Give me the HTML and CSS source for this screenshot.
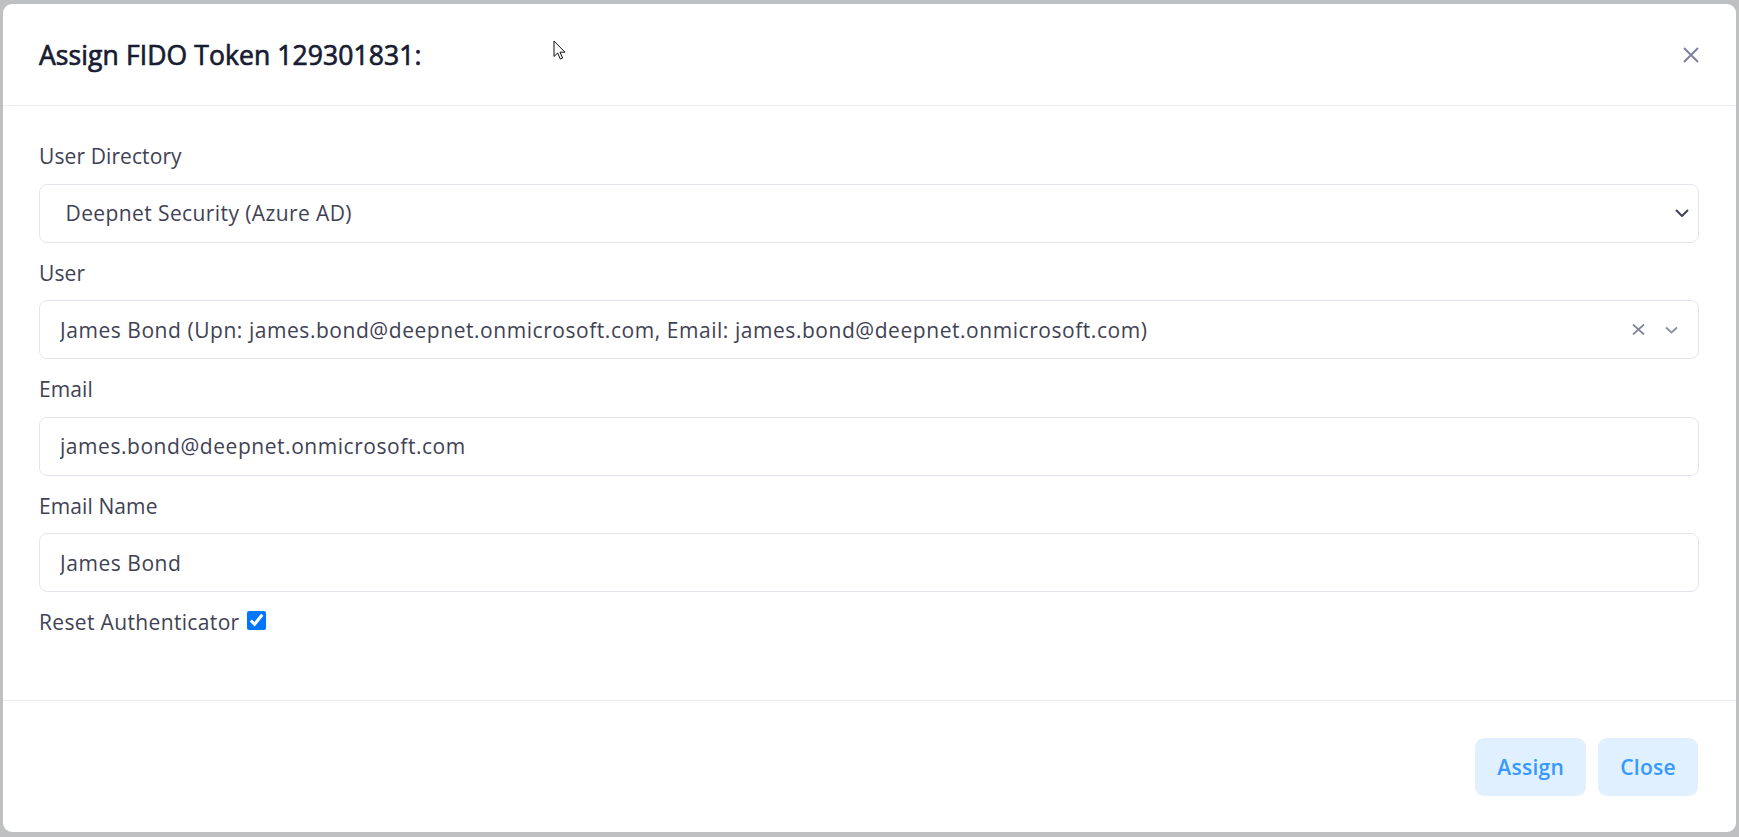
FILE: index.html
```html
<!DOCTYPE html>
<html lang="en">
<head>
<meta charset="utf-8">
<title>Assign FIDO Token</title>
<link rel="stylesheet" href="styles.css">
</head>
<body>
<div class="backdrop">
  <div class="modal">
    <div class="modal-header">
      <h2 class="modal-title">Assign FIDO Token 129301831:</h2>
      <button class="btn-close" aria-label="Close">
        <svg viewBox="0 0 16 16" width="16" height="16"><path d="M1 1L15 15M15 1L1 15"/></svg>
      </button>
    </div>
    <div class="modal-body">
      <div class="field">
        <label class="field-label">User Directory</label>
        <div class="control control-select">
          <span class="control-value">Deepnet Security (Azure AD)</span>
          <svg class="chev-dark" viewBox="0 0 14 8" width="14" height="8"><path d="M1 1L7 7L13 1"/></svg>
        </div>
      </div>
      <div class="field">
        <label class="field-label">User</label>
        <div class="control control-combo">
          <span class="control-value">James Bond (Upn: james.bond@deepnet.onmicrosoft.com, Email: james.bond@deepnet.onmicrosoft.com)</span>
          <div class="indicators">
            <svg class="ind-clear" viewBox="0 0 13 11" width="13" height="11"><path d="M1 0.5L12 10.5M12 0.5L1 10.5"/></svg>
            <svg class="ind-chev" viewBox="0 0 13 8" width="13" height="8"><path d="M1 1.5L6.5 6.5L12 1.5"/></svg>
          </div>
        </div>
      </div>
      <div class="field">
        <label class="field-label">Email</label>
        <input class="control control-input" type="text" value="james.bond@deepnet.onmicrosoft.com">
      </div>
      <div class="field">
        <label class="field-label">Email Name</label>
        <input class="control control-input" type="text" value="James Bond">
      </div>
      <div class="check-row">
        <label class="check-label">Reset Authenticator<input class="check" type="checkbox" checked></label>
      </div>
    </div>
    <div class="modal-footer">
      <button class="btn">Assign</button>
      <button class="btn">Close</button>
    </div>
  </div>
  <svg class="cursor" viewBox="0 0 13 20" width="13" height="20"><path d="M1 1L1 16.5L4.6 13L7.3 19L9.6 18L7 12.2L12 12.2Z"/></svg>
</div>
</body>
</html>
```

FILE: styles.css
```css
html, body {
  margin: 0;
  height: 100%;
}

body {
  background: #bfc0c2;
  font-family: "Open Sans", "Noto Sans", sans-serif;
  color: #3f4254;
  overflow: hidden;
}

.backdrop {
  position: relative;
  height: 100vh;
  box-sizing: border-box;
  padding: 4px 3px 5px 3px;
  display: flex;
}

.modal {
  flex: 1;
  background: #ffffff;
  border-radius: 9px;
  display: flex;
  flex-direction: column;
  overflow: hidden;
}

.modal-header {
  flex: none;
  height: 101px;
  border-bottom: 1px solid #ebedf3;
  display: flex;
  align-items: center;
  justify-content: space-between;
  padding: 0 37px 0 36px;
}

.modal-title {
  margin: 0;
  font-size: 26.5px;
  font-weight: 500;
  letter-spacing: 0.1px;
  -webkit-text-stroke: 0.7px #181c32;
  color: #181c32;
}

.btn-close {
  width: 16px;
  height: 16px;
  padding: 0;
  border: 0;
  background: none;
  display: flex;
}

.btn-close path {
  stroke: #7e8299;
  stroke-width: 2;
  fill: none;
}

.modal-body {
  flex: 1;
  padding: 35px 37px 0 36px;
}

.field {
  margin-bottom: 15px;
}

.field-label {
  display: block;
  font-size: 21px;
  line-height: 31.5px;
  margin-bottom: 11px;
  color: #3f4254;
  letter-spacing: 0.1px;
}

.control {
  display: flex;
  align-items: center;
  width: 100%;
  height: 59px;
  box-sizing: border-box;
  border: 1px solid #e4e6ef;
  border-radius: 8px;
  background: #ffffff;
  font-family: inherit;
  font-size: 21px;
  letter-spacing: 0.55px;
  color: #3f4254;
  padding: 0 20px;
  margin: 0;
  outline: none;
}

.control-value {
  flex: 1;
  white-space: nowrap;
  overflow: hidden;
}

.control-select {
  padding: 0 9px 0 25.5px;
  letter-spacing: 0.4px;
}

.chev-dark path {
  stroke: #3f4254;
  stroke-width: 2;
  fill: none;
}

.control-combo {
  padding: 0 20px 0 20px;
}

.indicators {
  display: flex;
  align-items: center;
  gap: 20px;
}

.ind-clear path {
  stroke: #7e8299;
  stroke-width: 1.7;
  fill: none;
}

.ind-chev path {
  stroke: #8d8fa6;
  stroke-width: 1.8;
  fill: none;
}

.check-label {
  font-size: 21px;
  line-height: 31.5px;
  letter-spacing: 0.35px;
  color: #3f4254;
}

.check {
  width: 19px;
  height: 19px;
  margin: 0 0 1px 7px;
  vertical-align: baseline;
  accent-color: #0075ff;
}

.modal-footer {
  flex: none;
  height: 131px;
  border-top: 1px solid #ebedf3;
  display: flex;
  align-items: center;
  justify-content: flex-end;
  gap: 12px;
  padding: 0 38px;
}

.btn {
  height: 58px;
  padding: 0 22px;
  border: 0;
  border-radius: 9px;
  background: #e1f0ff;
  color: #3699ff;
  font-family: inherit;
  font-size: 21px;
  font-weight: 600;
  letter-spacing: 0.3px;
}

.cursor {
  position: absolute;
  left: 553px;
  top: 40px;
}

.cursor path {
  fill: #ffffff;
  stroke: #111111;
  stroke-width: 1;
  stroke-linejoin: round;
}
```
